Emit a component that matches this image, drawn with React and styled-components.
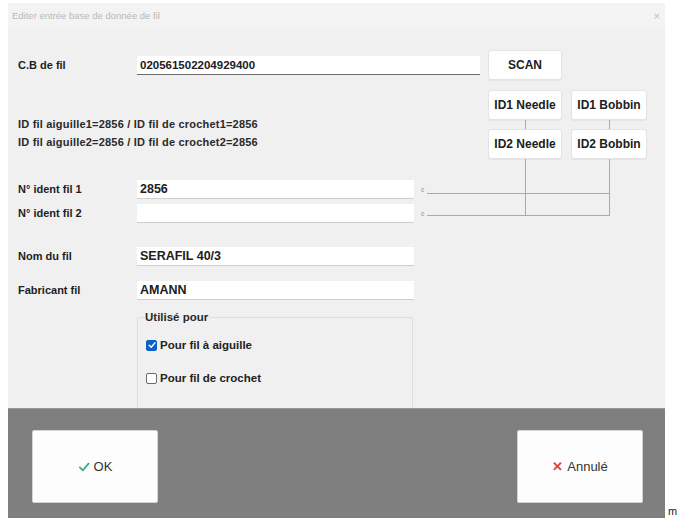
import styled, { createGlobalStyle } from 'styled-components';

const GlobalStyle = createGlobalStyle`
  html, body {
    margin: 0;
    background: #fff;
  }
  body {
    font-family: "Liberation Sans", Arial, sans-serif;
    color: #222;
  }
`;

const Page = styled.div`
  display: flex;
  align-items: flex-end;
  gap: 3px;
  padding: 3px 0 0 8px;
`;

const Window = styled.div`
  width: 657px;
  height: 515px;
  background: #f0f0f0;
  display: flex;
  flex-direction: column;
`;

const TitleBar = styled.div`
  height: 25px;
  flex: none;
  display: flex;
  align-items: center;
  justify-content: space-between;
  padding: 0 5px 0 4px;
  background: #f3f3f3;
  color: #b8b8b8;
  font-size: 9.5px;
`;

const Close = styled.span`
  font-size: 11px;
  color: #bcbcbc;
`;

const Body = styled.div`
  position: relative;
  height: 380px;
  flex: none;
  box-sizing: border-box;
  padding: 22px 0 0 10px;
  overflow: hidden;
`;

const Connectors = styled.svg`
  position: absolute;
  left: 0;
  top: 0;
  pointer-events: none;
`;

const TopRow = styled.div`
  display: flex;
  align-items: center;
  height: 30px;
`;

const Label = styled.div`
  width: 119px;
  flex: none;
  font-size: 11px;
  font-weight: bold;
  color: #1e1e1e;
`;

const TextInput = styled.div`
  width: ${(p) => p.$width}px;
  height: 19px;
  flex: none;
  box-sizing: border-box;
  background: #fff;
  border-bottom: 1px solid ${(p) => (p.$dark ? '#6a6a6a' : '#cfcfcf')};
  display: flex;
  align-items: center;
  padding-left: 3px;
  font-size: ${(p) => p.$size || 12.5}px;
  font-weight: bold;
  color: #202020;
`;

const ActionButton = styled.div`
  box-sizing: border-box;
  height: 30px;
  background: #fff;
  border: 1px solid #e4e4e4;
  border-radius: 3px;
  box-shadow: 0 1px 1px rgba(0, 0, 0, 0.05);
  display: flex;
  align-items: center;
  justify-content: center;
  font-size: 12px;
  font-weight: bold;
  color: #202020;
  white-space: nowrap;
`;

const ScanButton = styled(ActionButton)`
  width: 74px;
  margin-left: 8px;
`;

const IdSection = styled.div`
  display: flex;
  margin-top: 10px;
`;

const Info = styled.div`
  width: 470px;
  flex: none;
  padding-top: 25px;
  font-size: 11px;
  font-weight: bold;
  letter-spacing: 0.2px;
  line-height: 18px;
  color: #2a2a2a;
`;

const IdGrid = styled.div`
  display: grid;
  grid-template-columns: 74px 76px;
  grid-auto-rows: 30px;
  gap: 9px;
`;

const FieldRow = styled.div`
  display: flex;
  align-items: center;
  height: 18px;
  margin-top: ${(p) => p.$gap}px;
`;

const Marker = styled.span`
  margin-left: 7px;
  font-size: 7px;
  color: #999;
`;

const Group = styled.fieldset`
  width: 276px;
  height: 130px;
  box-sizing: border-box;
  margin: 11px 0 0 119px;
  padding: 13px 0 0 8px;
  border: 1px solid #dedede;
  border-radius: 2px;
`;

const Legend = styled.legend`
  padding: 0 1px;
  margin-left: -2px;
  font-size: 11.5px;
  font-weight: bold;
  color: #2a2a2a;
  line-height: 15px;
`;

const CheckRow = styled.div`
  display: flex;
  align-items: center;
  gap: 3px;
  height: 14px;
  margin-top: ${(p) => p.$gap || 0}px;
  font-size: 11.5px;
  font-weight: bold;
  color: #222;
`;

const Box = styled.span`
  width: 11px;
  height: 11px;
  box-sizing: border-box;
  border-radius: 2px;
  border: 1px solid ${(p) => (p.$checked ? '#0a5fc0' : '#6b6b6b')};
  background: ${(p) => (p.$checked ? '#0a64c8' : '#fff')};
  display: flex;
  align-items: center;
  justify-content: center;
`;

const Footer = styled.div`
  height: 110px;
  flex: none;
  box-sizing: border-box;
  background: #7f7f7f;
  border-top: 1px solid #969696;
  display: flex;
  justify-content: space-between;
  align-items: flex-start;
  padding: 21px 22px 0 24px;
`;

const DialogButton = styled.div`
  width: 126px;
  height: 73px;
  box-sizing: border-box;
  background: #fdfdfd;
  border: 1px solid #d4d4d4;
  border-radius: 2px;
  display: flex;
  align-items: center;
  justify-content: center;
  gap: 4px;
  font-size: 13px;
  color: #333;
`;

const Cross = styled.span`
  color: #d9463f;
  font-weight: bold;
  font-size: 13px;
`;

const Mark = styled.span`
  font-size: 11px;
  line-height: 11px;
  margin-bottom: 1px;
  color: #222;
`;

const Check = ({ color = '#fff', size = 9, width = 1.6 }) => (
  <svg width={size} height={size} viewBox="0 0 10 10">
    <polyline
      points="1.5,5.3 4,7.8 8.8,2.2"
      fill="none"
      stroke={color}
      strokeWidth={width}
      strokeLinecap="round"
      strokeLinejoin="round"
    />
  </svg>
);

const CheckBox = ({ checked, label, gap }) => (
  <CheckRow $gap={gap}>
    <Box $checked={checked}>{checked && <Check size={8} />}</Box>
    {label}
  </CheckRow>
);

const App = () => {
  return (
    <>
      <GlobalStyle />
      <Page>
        <Window>
          <TitleBar>
            <span>Editer entrée base de donnée de fil</span>
            <Close>×</Close>
          </TitleBar>

          <Body>
            <Connectors width="657" height="380">
              <g stroke="#a9a9a9" strokeWidth="1">
                <line x1="517.5" y1="92" x2="517.5" y2="101" />
                <line x1="601.5" y1="92" x2="601.5" y2="101" />
                <line x1="517.5" y1="131" x2="517.5" y2="187.5" />
                <line x1="601.5" y1="131" x2="601.5" y2="187.5" />
                <line x1="419" y1="165.5" x2="602" y2="165.5" />
                <line x1="419" y1="187.5" x2="602" y2="187.5" />
              </g>
            </Connectors>

            <TopRow>
              <Label>C.B de fil</Label>
              <TextInput $width={343} $dark $size={11.5}>020561502204929400</TextInput>
              <ScanButton>SCAN</ScanButton>
            </TopRow>

            <IdSection>
              <Info>
                <div>ID fil aiguille1=2856 / ID fil de crochet1=2856</div>
                <div>ID fil aiguille2=2856 / ID fil de crochet2=2856</div>
              </Info>
              <IdGrid>
                <ActionButton>ID1 Needle</ActionButton>
                <ActionButton>ID1 Bobbin</ActionButton>
                <ActionButton>ID2 Needle</ActionButton>
                <ActionButton>ID2 Bobbin</ActionButton>
              </IdGrid>
            </IdSection>

            <FieldRow $gap={21}>
              <Label>N° ident fil 1</Label>
              <TextInput $width={277}>2856</TextInput>
              <Marker>ɛ</Marker>
            </FieldRow>
            <FieldRow $gap={6}>
              <Label>N° ident fil 2</Label>
              <TextInput $width={277} />
              <Marker>ɛ</Marker>
            </FieldRow>
            <FieldRow $gap={25}>
              <Label>Nom du fil</Label>
              <TextInput $width={277}>SERAFIL 40/3</TextInput>
            </FieldRow>
            <FieldRow $gap={16}>
              <Label>Fabricant fil</Label>
              <TextInput $width={277}>AMANN</TextInput>
            </FieldRow>

            <Group>
              <Legend>Utilisé pour</Legend>
              <CheckBox checked label="Pour fil à aiguille" />
              <CheckBox label="Pour fil de crochet" gap={19} />
            </Group>
          </Body>

          <Footer>
            <DialogButton>
              <Check color="#3fae7f" size={12} width={1.5} />
              OK
            </DialogButton>
            <DialogButton>
              <Cross>✕</Cross>
              Annulé
            </DialogButton>
          </Footer>
        </Window>
        <Mark>m</Mark>
      </Page>
    </>
  );
};

export default App;
